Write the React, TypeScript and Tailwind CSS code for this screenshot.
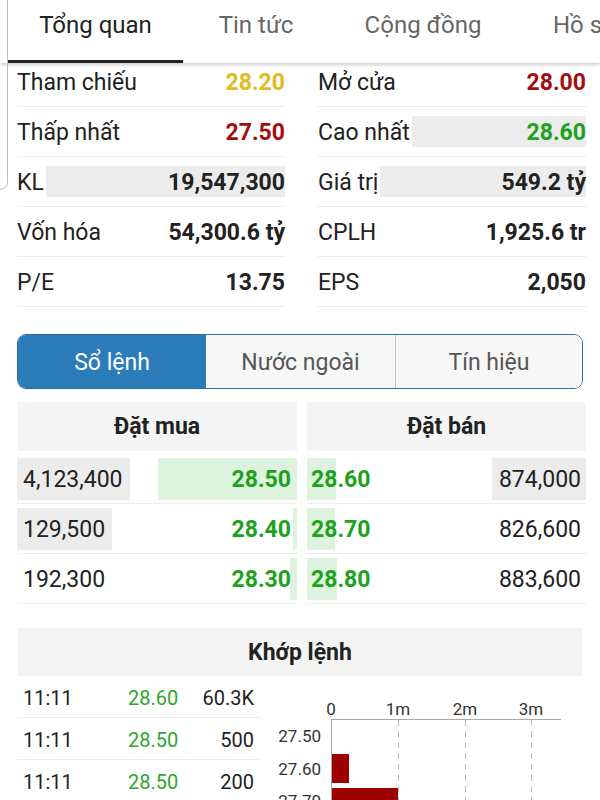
import React from "react";

type Stat = { label: string; value: string; color?: string; bar?: boolean };

const stats: [Stat, Stat][] = [
  [
    { label: "Tham chiếu", value: "28.20", color: "text-[#dfbc22]" },
    { label: "Mở cửa", value: "28.00", color: "text-[#a30d0d]" },
  ],
  [
    { label: "Thấp nhất", value: "27.50", color: "text-[#a30d0d]" },
    { label: "Cao nhất", value: "28.60", color: "text-[#1ca21c]", bar: true },
  ],
  [
    { label: "KL", value: "19,547,300", bar: true },
    { label: "Giá trị", value: "549.2 tỷ", bar: true },
  ],
  [
    { label: "Vốn hóa", value: "54,300.6 tỷ" },
    { label: "CPLH", value: "1,925.6 tr" },
  ],
  [
    { label: "P/E", value: "13.75" },
    { label: "EPS", value: "2,050" },
  ],
];

const book = [
  { bVol: "4,123,400", bVolW: 113, bPrice: "28.50", bPriceW: 139, sPrice: "28.60", sPriceW: 29, sVol: "874,000", sVolW: 94 },
  { bVol: "129,500", bVolW: 95, bPrice: "28.40", bPriceW: 4, sPrice: "28.70", sPriceW: 28, sVol: "826,600", sVolW: 0 },
  { bVol: "192,300", bVolW: 0, bPrice: "28.30", bPriceW: 7, sPrice: "28.80", sPriceW: 30, sVol: "883,600", sVolW: 0 },
];

const trades = [
  { time: "11:11", price: "28.60", vol: "60.3K" },
  { time: "11:11", price: "28.50", vol: "500" },
  { time: "11:11", price: "28.50", vol: "200" },
];

function StatCell({ s }: { s: Stat }) {
  return (
    <div className="flex h-[50px] items-center border-b border-[#ececec]">
      <span className="pt-[3px] text-[#222]">{s.label}</span>
      <div
        className={`ml-[2px] flex h-[31px] flex-1 items-center justify-end pt-[3px] font-bold ${
          s.bar ? "bg-[#ececec]" : ""
        } ${s.color ?? "text-[#222]"}`}
      >
        {s.value}
      </div>
    </div>
  );
}

function VolumeChart() {
  const grid = [136, 203, 269];
  return (
    <svg width="324" height="125" className="shrink-0" style={{ fontFamily: "Roboto, sans-serif" }}>
      <text x="69" y="39" fontSize="17" textAnchor="middle" fill="#333">0</text>
      <text x="136" y="39" fontSize="17" textAnchor="middle" fill="#333">1m</text>
      <text x="203" y="39" fontSize="17" textAnchor="middle" fill="#333">2m</text>
      <text x="269" y="39" fontSize="17" textAnchor="middle" fill="#333">3m</text>
      <line x1="69" y1="43.5" x2="299" y2="43.5" stroke="#aaa" strokeWidth="1" />
      <line x1="69.5" y1="43" x2="69.5" y2="125" stroke="#aaa" strokeWidth="1" />
      {grid.map((x) => (
        <line key={x} x1={x + 0.5} y1="44" x2={x + 0.5} y2="125" stroke="#bbb" strokeWidth="1" strokeDasharray="6 5" />
      ))}
      <text x="59" y="66" fontSize="17" textAnchor="end" fill="#333">27.50</text>
      <text x="59" y="99" fontSize="17" textAnchor="end" fill="#333">27.60</text>
      <text x="59" y="131" fontSize="17" textAnchor="end" fill="#333">27.70</text>
      <rect x="70" y="78" width="17" height="29" fill="#9c0000" />
      <rect x="70" y="112" width="66" height="20" fill="#9c0000" />
    </svg>
  );
}

export default function App() {
  return (
    <div
      className="relative h-[800px] w-[600px] overflow-hidden bg-white text-[#222]"
      style={{ fontFamily: "Roboto, 'Noto Sans', sans-serif" }}
    >
      {/* top tabs */}
      <div className="relative z-10 flex h-[63px] bg-white pl-[8px] text-[24px] shadow-[0_2px_3px_rgba(0,0,0,0.2)]">
        <div className="flex w-[175px] shrink-0 items-center justify-center border-b-[3px] border-[#222] pb-[10px] text-[#222]">
          Tổng quan
        </div>
        <div className="flex w-[146px] shrink-0 items-center justify-center pb-[13px] text-[#666]">Tin tức</div>
        <div className="flex w-[188px] shrink-0 items-center justify-center pb-[13px] text-[#666]">Cộng đồng</div>
        <div className="flex shrink-0 items-center whitespace-nowrap pb-[13px] pl-[36px] text-[#666]">Hồ sơ</div>
      </div>

      {/* edge of an overlay sheet */}
      <div className="absolute -left-[20px] -top-[10px] z-20 h-[200px] w-[28px] rounded-br-[8px] border border-[#bdbdbd]" />

      {/* stats */}
      <div className="-mt-[6px] grid grid-cols-[268px_268px] gap-x-[33px] px-[17px] text-[23px]">
        {stats.map(([l, r], i) => (
          <React.Fragment key={i}>
            <StatCell s={l} />
            <StatCell s={r} />
          </React.Fragment>
        ))}
      </div>

      {/* segmented tabs */}
      <div className="mx-[17px] mt-[27px] flex h-[55px] overflow-hidden rounded-[9px] border-[1.5px] border-[#2a6d9e] text-[23px]">
        <div className="flex w-[188px] items-center justify-center bg-[#2b7cb9] pt-[4px] text-white">Sổ lệnh</div>
        <div className="flex w-[190px] items-center justify-center border-r border-[#b9c8d4] bg-[#f7f7f7] pt-[4px] text-[#555]">
          Nước ngoài
        </div>
        <div className="flex flex-1 items-center justify-center bg-[#f7f7f7] pt-[4px] text-[#555]">Tín hiệu</div>
      </div>

      {/* order book */}
      <div className="mx-[17px] mt-[13px] grid grid-cols-[280px_279px] gap-x-[10px] text-[23px]">
        <div className="flex h-[49px] items-center justify-center bg-[#f4f4f4] pt-[2px] font-bold">Đặt mua</div>
        <div className="flex h-[49px] items-center justify-center bg-[#f4f4f4] pt-[2px] font-bold">Đặt bán</div>
        <div className="col-span-2 h-[3px]" />
        {book.map((r, i) => (
          <React.Fragment key={i}>
            <div className="relative flex h-[50px] items-center justify-between border-b border-[#ececec] pl-[6px] pr-[6px] pt-[4px]">
              <div className="absolute left-0 top-[4px] h-[42px] bg-[#ececec]" style={{ width: r.bVolW }} />
              <div className="absolute right-0 top-[4px] h-[42px] bg-[#ddf3de]" style={{ width: r.bPriceW }} />
              <span className="relative">{r.bVol}</span>
              <span className="relative font-bold text-[#1ca21c]">{r.bPrice}</span>
            </div>
            <div className="relative flex h-[50px] items-center justify-between border-b border-[#ececec] pl-[4px] pr-[5px] pt-[4px]">
              <div className="absolute left-0 top-[4px] h-[42px] bg-[#ddf3de]" style={{ width: r.sPriceW }} />
              <div className="absolute right-0 top-[4px] h-[42px] bg-[#ececec]" style={{ width: r.sVolW }} />
              <span className="relative font-bold text-[#1ca21c]">{r.sPrice}</span>
              <span className="relative">{r.sVol}</span>
            </div>
          </React.Fragment>
        ))}
      </div>

      {/* matched orders */}
      <div className="mx-[17px] mt-[24px] flex h-[48px] items-center justify-center bg-[#f4f4f4] pt-[3px] text-[23px] font-bold">
        Khớp lệnh
      </div>
      <div className="ml-[17px] flex">
        <div className="w-[245px] text-[20px]">
          {trades.map((t, i) => (
            <div key={i} className="flex h-[42px] items-center border-b border-[#ececec] pl-[6px] pr-[8px] pt-[2px]">
              <span className="w-[105px]">{t.time}</span>
              <span className="text-[#2ea62e]">{t.price}</span>
              <span className="ml-auto">{t.vol}</span>
            </div>
          ))}
        </div>
        <VolumeChart />
      </div>
    </div>
  );
}
